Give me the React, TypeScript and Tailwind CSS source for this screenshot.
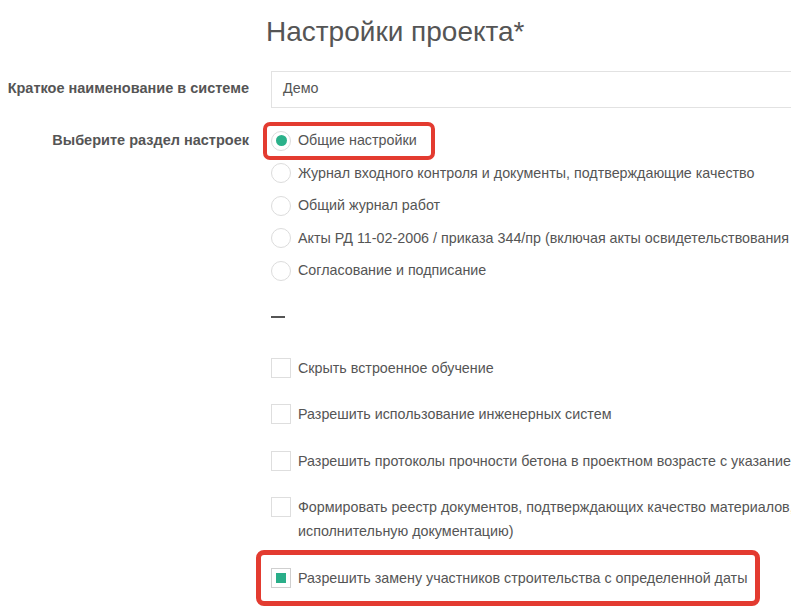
import { ReactNode } from 'react';

const sections = [
  'Общие настройки',
  'Журнал входного контроля и документы, подтверждающие качество',
  'Общий журнал работ',
  'Акты РД 11-02-2006 / приказа 344/пр (включая акты освидетельствования скрытых работ)',
  'Согласование и подписание',
];

function Radio({ checked }: { checked?: boolean }) {
  return (
    <span className="flex h-5 w-5 shrink-0 items-center justify-center rounded-full border border-[#dcdcdc] bg-white">
      {checked && <span className="h-[11px] w-[11px] rounded-full bg-[#2bb18a]" />}
    </span>
  );
}

function Checkbox({ checked }: { checked?: boolean }) {
  return (
    <span
      className={`mt-[2px] flex h-5 w-5 shrink-0 items-center justify-center border bg-white ${
        checked ? 'border-[#cfcfcf]' : 'border-[#dedede]'
      }`}
    >
      {checked && <span className="h-[10px] w-[10px] bg-[#2aae89]" />}
    </span>
  );
}

function Highlight({ className }: { className: string }) {
  return <span className={`pointer-events-none absolute border-[#e33b30] ${className}`} />;
}

function CheckRow({ children, checked, mark }: { children: ReactNode; checked?: boolean; mark?: boolean }) {
  return (
    <div className="relative flex items-start gap-[7px] leading-[24px]">
      <Checkbox checked={checked} />
      <span className="whitespace-nowrap">{children}</span>
      {mark && <Highlight className="left-[-15px] top-[-16px] h-[56px] w-[504px] rounded-[8px] border-[5px]" />}
    </div>
  );
}

export default function App() {
  return (
    <div className="h-[610px] w-[791px] overflow-hidden bg-white font-['Liberation_Sans',Arial,sans-serif] text-[14.3px] text-[#555]">
      <h1 className="ml-[266px] pt-[15px] text-[28px] leading-[1.2] font-normal">Настройки проекта*</h1>

      <div className="mt-[22px] grid grid-cols-[249px_1fr] gap-x-[22px]">
        {/* Name */}
        <div className="flex h-[37px] items-center justify-end text-[14.5px] font-bold whitespace-nowrap">
          Краткое наименование в системе
        </div>
        <div className="flex h-[37px] w-[600px] items-center border border-[#e2e2e2] px-[11px]">Демо</div>

        {/* Section */}
        <div className="mt-[17px] flex h-[32.5px] items-center justify-end text-[14.5px] font-bold whitespace-nowrap">
          Выберите раздел настроек
        </div>
        <div className="mt-[17px]">
          {sections.map((s, i) => (
            <div key={s} className="relative flex h-[32.5px] items-center gap-[7px]">
              <Radio checked={i === 0} />
              <span className="whitespace-nowrap">{s}</span>
              {i === 0 && (
                <Highlight className="left-[-8px] top-[-3px] h-[38px] w-[172px] rounded-[7px] border-[4px]" />
              )}
            </div>
          ))}

          <div className="mt-[29px] h-[2px] w-[14px] bg-[#555]" />

          <div className="mt-[37.5px] flex flex-col gap-[22.5px]">
            <CheckRow>Скрыть встроенное обучение</CheckRow>
            <CheckRow>Разрешить использование инженерных систем</CheckRow>
            <CheckRow>Разрешить протоколы прочности бетона в проектном возрасте с указанием даты</CheckRow>
            <CheckRow>
              Формировать реестр документов, подтверждающих качество материалов, (включая в
              <br />
              исполнительную документацию)
            </CheckRow>
            <CheckRow checked mark>
              Разрешить замену участников строительства с определенной даты
            </CheckRow>
          </div>
        </div>
      </div>
    </div>
  );
}
